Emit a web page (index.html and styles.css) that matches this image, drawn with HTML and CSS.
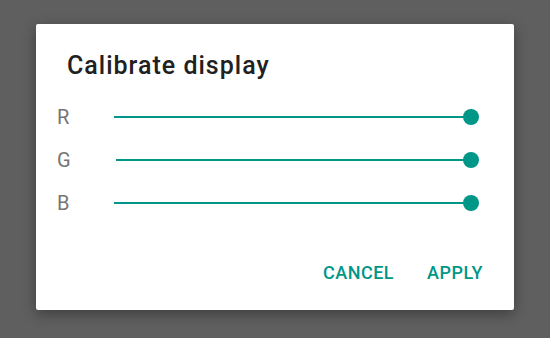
FILE: index.html
```html
<!DOCTYPE html>
<html>
<head>
<meta charset="utf-8">
<link rel="stylesheet" href="styles.css">
</head>
<body>
<div class="dialog">
  <div class="title">Calibrate display</div>
  <div class="rows">
    <div class="row"><span class="label">R</span><div class="slider"><div class="track"></div><div class="thumb"></div></div></div>
    <div class="row"><span class="label">G</span><div class="slider"><div class="track"></div><div class="thumb"></div></div></div>
    <div class="row"><span class="label">B</span><div class="slider"><div class="track"></div><div class="thumb"></div></div></div>
  </div>
  <div class="actions">
    <span class="btn">CANCEL</span>
    <span class="btn">APPLY</span>
  </div>
</div>
</body>
</html>
```
FILE: styles.css
```css
html, body {
  margin: 0;
  padding: 0;
  background: #5f5f5f;
  font-family: Roboto, "Liberation Sans", sans-serif;
}
body {
  width: 550px;
  height: 338px;
  overflow: hidden;
  padding-top: 24px;
  box-sizing: border-box;
}
.dialog {
  margin-left: 36px;
  width: 478px;
  height: 286px;
  background: #fff;
  border-radius: 2px;
  box-shadow: 0 4px 14px rgba(0, 0, 0, 0.35);
  box-sizing: border-box;
  padding-top: 26px;
  display: flex;
  flex-direction: column;
}
.title {
  font-size: 25px;
  font-weight: 500;
  line-height: 32px;
  letter-spacing: 1px;
  color: #212121;
  padding-left: 31px;
}
.rows {
  margin-top: 13px;
  padding-left: 21px;
  padding-right: 35px;
}
.row {
  height: 43px;
  display: flex;
  align-items: center;
}
.label {
  font-size: 20px;
  line-height: 20px;
  color: #757575;
  margin-right: 45px;
}
.slider {
  flex: 1;
  display: flex;
  align-items: center;
  height: 16px;
}
.track {
  flex: 1;
  height: 2px;
  background: #009688;
  margin-right: -8px;
}
.thumb {
  width: 16px;
  height: 16px;
  border-radius: 50%;
  background: #009688;
}
.actions {
  margin-top: 39px;
  display: flex;
  justify-content: flex-end;
  gap: 33px;
  padding-right: 31px;
}
.btn {
  font-size: 18px;
  font-weight: 500;
  line-height: 20px;
  letter-spacing: 0.5px;
  color: #009688;
}
```
